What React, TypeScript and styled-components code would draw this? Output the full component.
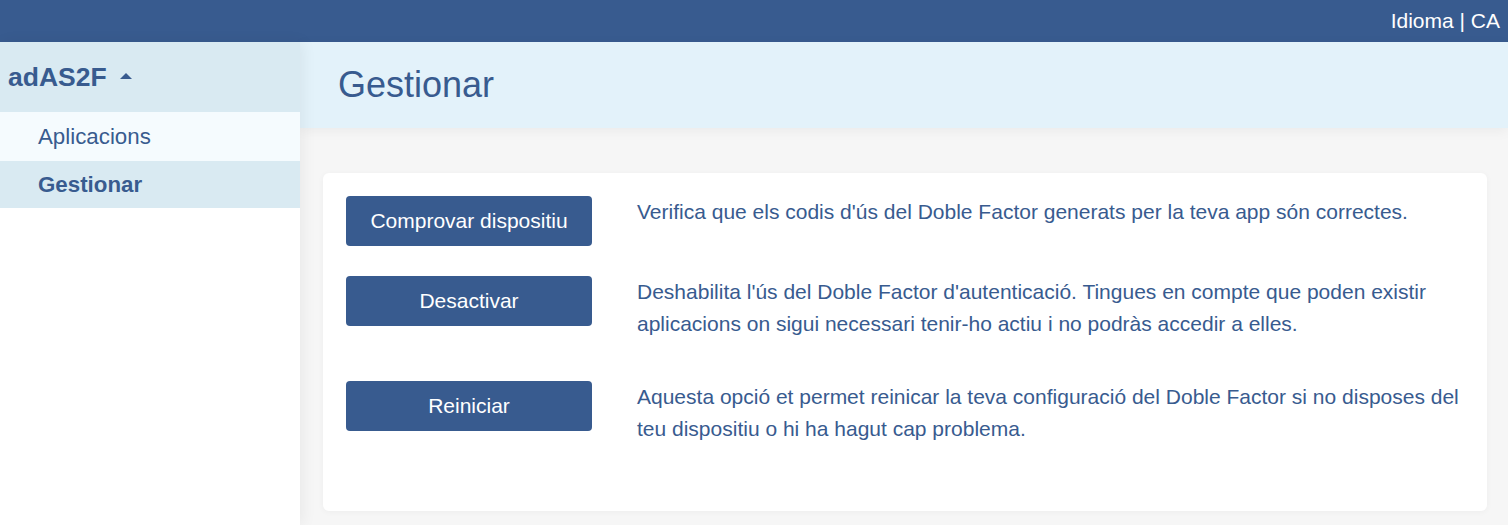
import React from 'react';
import styled, { createGlobalStyle } from 'styled-components';

const blue = '#385b8f';

const GlobalStyle = createGlobalStyle`
  html, body {
    margin: 0;
    padding: 0;
    height: 100%;
  }
  body {
    font-family: 'Liberation Sans', Arial, sans-serif;
    color: ${blue};
  }
  #root {
    height: 100%;
  }
`;

const Page = styled.div`
  display: flex;
  flex-direction: column;
  height: 100vh;
  overflow: hidden;
`;

const TopBar = styled.div`
  height: 42px;
  flex-shrink: 0;
  background: ${blue};
  display: flex;
  align-items: center;
  justify-content: flex-end;
  padding: 0 8px;
  color: #fff;
  font-size: 21px;
`;

const Body = styled.div`
  flex: 1;
  display: flex;
  min-height: 0;
`;

const Sidebar = styled.aside`
  width: 300px;
  flex-shrink: 0;
  background: #fff;
  position: relative;
  z-index: 2;
  box-shadow: 3px 0 14px rgba(0, 0, 0, 0.06);
`;

const Brand = styled.div`
  height: 70px;
  background: #d9eaf2;
  display: flex;
  align-items: center;
  gap: 13px;
  padding-left: 8px;
  font-size: 26.5px;
  font-weight: bold;
`;

const Caret = styled.span`
  width: 0;
  height: 0;
  border-left: 6px solid transparent;
  border-right: 6px solid transparent;
  border-bottom: 6px solid ${blue};
  margin-top: -2px;
`;

const NavItem = styled.div<{ $active?: boolean; $height: number }>`
  height: ${p => p.$height}px;
  display: flex;
  align-items: center;
  padding-left: 38px;
  font-size: 22.3px;
  font-weight: ${p => (p.$active ? 'bold' : 'normal')};
  background: ${p => (p.$active ? '#d9eaf2' : '#f5fbfe')};
`;

const Main = styled.main`
  flex: 1;
  display: flex;
  flex-direction: column;
  background: #f6f6f6;
  min-width: 0;
`;

const Header = styled.div`
  height: 86px;
  flex-shrink: 0;
  background: #e3f2fa;
  display: flex;
  align-items: center;
  padding-left: 38px;
  position: relative;
  z-index: 1;
  box-shadow: 0 3px 12px rgba(0, 0, 0, 0.05);
`;

const Title = styled.h1`
  margin: 0;
  font-size: 36px;
  font-weight: normal;
`;

const Content = styled.div`
  padding: 45px 21px 0 23px;
`;

const Card = styled.div`
  background: #fff;
  border-radius: 6px;
  padding: 23px 23px 25px;
  box-shadow: 0 1px 6px rgba(0, 0, 0, 0.04);
`;

const Row = styled.div`
  display: flex;
  align-items: flex-start;
  gap: 45px;
  margin-bottom: 30px;
`;

const ActionButton = styled.button`
  width: 246px;
  height: 50px;
  flex-shrink: 0;
  border: none;
  border-radius: 4px;
  background: ${blue};
  color: #fff;
  font-family: inherit;
  font-size: 21px;
  cursor: pointer;
`;

const Description = styled.p`
  margin: 0 0 11px;
  font-size: 21px;
  line-height: 32px;
`;

const actions = [
  {
    label: 'Comprovar dispositiu',
    text: "Verifica que els codis d'ús del Doble Factor generats per la teva app són correctes.",
  },
  {
    label: 'Desactivar',
    text: "Deshabilita l'ús del Doble Factor d'autenticació. Tingues en compte que poden existir aplicacions on sigui necessari tenir-ho actiu i no podràs accedir a elles.",
  },
  {
    label: 'Reiniciar',
    text: 'Aquesta opció et permet reinicar la teva configuració del Doble Factor si no disposes del teu dispositiu o hi ha hagut cap problema.',
  },
];

export default function App() {
  return (
    <Page>
      <GlobalStyle />
      <TopBar>Idioma | CA</TopBar>
      <Body>
        <Sidebar>
          <Brand>
            adAS2F <Caret />
          </Brand>
          <NavItem $height={49}>Aplicacions</NavItem>
          <NavItem $height={47} $active>
            Gestionar
          </NavItem>
        </Sidebar>
        <Main>
          <Header>
            <Title>Gestionar</Title>
          </Header>
          <Content>
            <Card>
              {actions.map(a => (
                <Row key={a.label}>
                  <ActionButton>{a.label}</ActionButton>
                  <Description>{a.text}</Description>
                </Row>
              ))}
            </Card>
          </Content>
        </Main>
      </Body>
    </Page>
  );
}
